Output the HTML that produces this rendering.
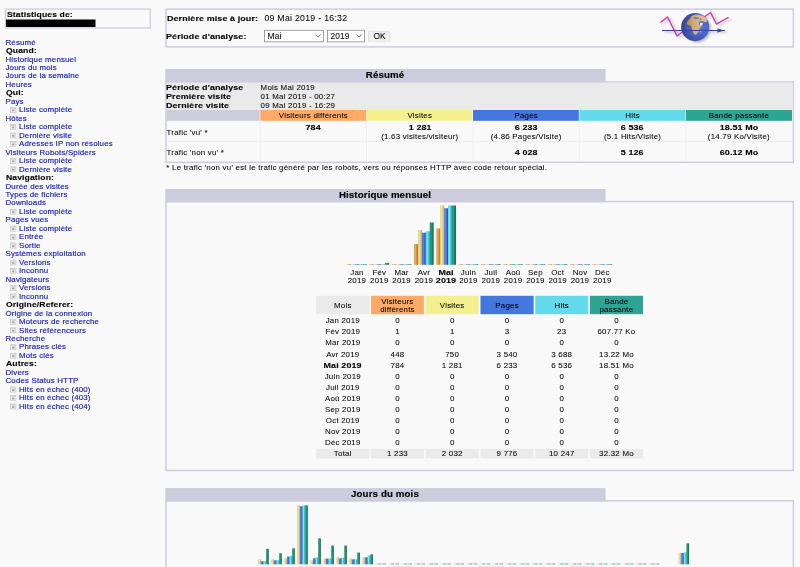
<!DOCTYPE html>
<html><head><meta charset="utf-8"><title>Statistiques</title>
<style>
html,body{margin:0;padding:0;}
body{width:800px;height:567px;overflow:hidden;background:#f9f9f9;font-family:"Liberation Sans",sans-serif;font-size:7.9px;color:#000;position:relative;}
.a{position:absolute;white-space:nowrap;}
.t{position:absolute;white-space:nowrap;line-height:9px;height:9px;font-size:7.9px;letter-spacing:0.17px;-webkit-text-stroke:0.06px currentColor;}
.m{letter-spacing:0.23px;}
.b{-webkit-text-stroke:0.12px currentColor;font-weight:bold;letter-spacing:0.1px;transform:scaleX(1.09);transform-origin:0 50%;}
.mb{-webkit-text-stroke:0.12px currentColor;font-weight:bold;letter-spacing:0.1px;transform:scaleX(1.13);transform-origin:0 50%;}
.ti{-webkit-text-stroke:0.15px currentColor;font-weight:bold;font-size:8.6px;letter-spacing:0.1px;transform:scaleX(1.13);}
.c.mb,.c.ti{transform-origin:50% 50%;}
.lk{color:#1018bb;-webkit-text-stroke:0.15px currentColor;}
.c{text-align:center;}
#sh{position:absolute;left:0;top:0;}
#all{position:absolute;left:0;top:0;width:800px;height:567px;filter:blur(0.3px);}
</style></head><body>
<div id="all"><svg id="sh" width="800" height="567" viewBox="0 0 800 567"><defs><linearGradient id="gU" x1="0" x2="1" y1="0" y2="0"><stop offset="0" stop-color="#d49038"/><stop offset="0.3" stop-color="#ecb060"/><stop offset="1" stop-color="#b07018"/></linearGradient><linearGradient id="gV" x1="0" x2="1" y1="0" y2="0"><stop offset="0" stop-color="#d4c878"/><stop offset="0.3" stop-color="#ece4a0"/><stop offset="1" stop-color="#c0b060"/></linearGradient><linearGradient id="gP" x1="0" x2="1" y1="0" y2="0"><stop offset="0" stop-color="#3a60d0"/><stop offset="0.3" stop-color="#5c88ee"/><stop offset="1" stop-color="#2444aa"/></linearGradient><linearGradient id="gH" x1="0" x2="1" y1="0" y2="0"><stop offset="0" stop-color="#40d0e0"/><stop offset="0.3" stop-color="#78ecf6"/><stop offset="1" stop-color="#20a0b8"/></linearGradient><linearGradient id="gK" x1="0" x2="1" y1="0" y2="0"><stop offset="0" stop-color="#1a8868"/><stop offset="0.3" stop-color="#2a9c7c"/><stop offset="1" stop-color="#0a6c50"/></linearGradient></defs>
<rect x="5.53" y="9.03" width="144.75" height="18.95" fill="none" stroke="#ccccdd" stroke-width="1.25"/>
<rect x="6.00" y="19.50" width="89.50" height="7.50" fill="#000"/>
<rect x="10.45" y="107.56" width="5.5" height="5.0" fill="#ececec" stroke="#c6c6c6" stroke-width="0.7"/>
<rect x="10.80" y="107.91" width="4.8" height="1.1" fill="#d2d2d2"/>
<rect x="12.10" y="109.66" width="2.2" height="1.7" fill="#a0a0a0"/>
<rect x="10.45" y="124.50" width="5.5" height="5.0" fill="#ececec" stroke="#c6c6c6" stroke-width="0.7"/>
<rect x="10.80" y="124.85" width="4.8" height="1.1" fill="#d2d2d2"/>
<rect x="12.10" y="126.60" width="2.2" height="1.7" fill="#a0a0a0"/>
<rect x="10.45" y="132.97" width="5.5" height="5.0" fill="#ececec" stroke="#c6c6c6" stroke-width="0.7"/>
<rect x="10.80" y="133.32" width="4.8" height="1.1" fill="#d2d2d2"/>
<rect x="12.10" y="135.07" width="2.2" height="1.7" fill="#a0a0a0"/>
<rect x="10.45" y="141.44" width="5.5" height="5.0" fill="#ececec" stroke="#c6c6c6" stroke-width="0.7"/>
<rect x="10.80" y="141.79" width="4.8" height="1.1" fill="#d2d2d2"/>
<rect x="12.10" y="143.54" width="2.2" height="1.7" fill="#a0a0a0"/>
<rect x="10.45" y="158.38" width="5.5" height="5.0" fill="#ececec" stroke="#c6c6c6" stroke-width="0.7"/>
<rect x="10.80" y="158.73" width="4.8" height="1.1" fill="#d2d2d2"/>
<rect x="12.10" y="160.48" width="2.2" height="1.7" fill="#a0a0a0"/>
<rect x="10.45" y="166.85" width="5.5" height="5.0" fill="#ececec" stroke="#c6c6c6" stroke-width="0.7"/>
<rect x="10.80" y="167.20" width="4.8" height="1.1" fill="#d2d2d2"/>
<rect x="12.10" y="168.95" width="2.2" height="1.7" fill="#a0a0a0"/>
<rect x="10.45" y="209.20" width="5.5" height="5.0" fill="#ececec" stroke="#c6c6c6" stroke-width="0.7"/>
<rect x="10.80" y="209.55" width="4.8" height="1.1" fill="#d2d2d2"/>
<rect x="12.10" y="211.30" width="2.2" height="1.7" fill="#a0a0a0"/>
<rect x="10.45" y="226.14" width="5.5" height="5.0" fill="#ececec" stroke="#c6c6c6" stroke-width="0.7"/>
<rect x="10.80" y="226.49" width="4.8" height="1.1" fill="#d2d2d2"/>
<rect x="12.10" y="228.24" width="2.2" height="1.7" fill="#a0a0a0"/>
<rect x="10.45" y="234.61" width="5.5" height="5.0" fill="#ececec" stroke="#c6c6c6" stroke-width="0.7"/>
<rect x="10.80" y="234.96" width="4.8" height="1.1" fill="#d2d2d2"/>
<rect x="12.10" y="236.71" width="2.2" height="1.7" fill="#a0a0a0"/>
<rect x="10.45" y="243.08" width="5.5" height="5.0" fill="#ececec" stroke="#c6c6c6" stroke-width="0.7"/>
<rect x="10.80" y="243.43" width="4.8" height="1.1" fill="#d2d2d2"/>
<rect x="12.10" y="245.18" width="2.2" height="1.7" fill="#a0a0a0"/>
<rect x="10.45" y="260.02" width="5.5" height="5.0" fill="#ececec" stroke="#c6c6c6" stroke-width="0.7"/>
<rect x="10.80" y="260.37" width="4.8" height="1.1" fill="#d2d2d2"/>
<rect x="12.10" y="262.12" width="2.2" height="1.7" fill="#a0a0a0"/>
<rect x="10.45" y="268.49" width="5.5" height="5.0" fill="#ececec" stroke="#c6c6c6" stroke-width="0.7"/>
<rect x="10.80" y="268.84" width="4.8" height="1.1" fill="#d2d2d2"/>
<rect x="12.10" y="270.59" width="2.2" height="1.7" fill="#a0a0a0"/>
<rect x="10.45" y="285.43" width="5.5" height="5.0" fill="#ececec" stroke="#c6c6c6" stroke-width="0.7"/>
<rect x="10.80" y="285.78" width="4.8" height="1.1" fill="#d2d2d2"/>
<rect x="12.10" y="287.53" width="2.2" height="1.7" fill="#a0a0a0"/>
<rect x="10.45" y="293.90" width="5.5" height="5.0" fill="#ececec" stroke="#c6c6c6" stroke-width="0.7"/>
<rect x="10.80" y="294.25" width="4.8" height="1.1" fill="#d2d2d2"/>
<rect x="12.10" y="296.00" width="2.2" height="1.7" fill="#a0a0a0"/>
<rect x="10.45" y="319.31" width="5.5" height="5.0" fill="#ececec" stroke="#c6c6c6" stroke-width="0.7"/>
<rect x="10.80" y="319.66" width="4.8" height="1.1" fill="#d2d2d2"/>
<rect x="12.10" y="321.41" width="2.2" height="1.7" fill="#a0a0a0"/>
<rect x="10.45" y="327.78" width="5.5" height="5.0" fill="#ececec" stroke="#c6c6c6" stroke-width="0.7"/>
<rect x="10.80" y="328.13" width="4.8" height="1.1" fill="#d2d2d2"/>
<rect x="12.10" y="329.88" width="2.2" height="1.7" fill="#a0a0a0"/>
<rect x="10.45" y="344.72" width="5.5" height="5.0" fill="#ececec" stroke="#c6c6c6" stroke-width="0.7"/>
<rect x="10.80" y="345.07" width="4.8" height="1.1" fill="#d2d2d2"/>
<rect x="12.10" y="346.82" width="2.2" height="1.7" fill="#a0a0a0"/>
<rect x="10.45" y="353.19" width="5.5" height="5.0" fill="#ececec" stroke="#c6c6c6" stroke-width="0.7"/>
<rect x="10.80" y="353.54" width="4.8" height="1.1" fill="#d2d2d2"/>
<rect x="12.10" y="355.29" width="2.2" height="1.7" fill="#a0a0a0"/>
<rect x="10.45" y="387.07" width="5.5" height="5.0" fill="#ececec" stroke="#c6c6c6" stroke-width="0.7"/>
<rect x="10.80" y="387.42" width="4.8" height="1.1" fill="#d2d2d2"/>
<rect x="12.10" y="389.17" width="2.2" height="1.7" fill="#a0a0a0"/>
<rect x="10.45" y="395.54" width="5.5" height="5.0" fill="#ececec" stroke="#c6c6c6" stroke-width="0.7"/>
<rect x="10.80" y="395.89" width="4.8" height="1.1" fill="#d2d2d2"/>
<rect x="12.10" y="397.64" width="2.2" height="1.7" fill="#a0a0a0"/>
<rect x="10.45" y="404.01" width="5.5" height="5.0" fill="#ececec" stroke="#c6c6c6" stroke-width="0.7"/>
<rect x="10.80" y="404.36" width="4.8" height="1.1" fill="#d2d2d2"/>
<rect x="12.10" y="406.11" width="2.2" height="1.7" fill="#a0a0a0"/>
<rect x="166.00" y="9.15" width="627.40" height="37.70" fill="none" stroke="#ccccdd" stroke-width="1.50"/>
<rect x="264.50" y="30.30" width="58.90" height="11.50" fill="#fff" stroke="#8c8c8c" stroke-width="0.8"/>
<path d="M315.50 34.45 l2.6 2.6 l2.6 -2.6" fill="none" stroke="#555" stroke-width="0.85"/>
<rect x="327.50" y="30.30" width="37.00" height="11.50" fill="#fff" stroke="#8c8c8c" stroke-width="0.8"/>
<path d="M356.60 34.45 l2.6 2.6 l2.6 -2.6" fill="none" stroke="#555" stroke-width="0.85"/>
<rect x="368.55" y="31.75" width="21.5" height="9.5" fill="#f0f0f0" stroke="#dadada" stroke-width="0.7"/>
<rect x="165.25" y="69.00" width="440.30" height="13.70" fill="#ccccdd"/>
<rect x="166.00" y="81.95" width="627.40" height="80.40" fill="none" stroke="#ccccdd" stroke-width="1.50"/>
<rect x="166.75" y="82.70" width="625.90" height="27.30" fill="#eaeaea"/>
<rect x="260.30" y="110.00" width="105.70" height="10.80" fill="#ffaa66"/>
<rect x="366.60" y="110.00" width="105.80" height="10.80" fill="#f4f090"/>
<rect x="473.00" y="110.00" width="105.80" height="10.80" fill="#4477dd"/>
<rect x="579.40" y="110.00" width="105.80" height="10.80" fill="#62daec"/>
<rect x="685.80" y="110.00" width="106.20" height="10.80" fill="#2ea495"/>
<rect x="166.75" y="110.00" width="92.95" height="10.80" fill="#ccccdd"/>
<rect x="166.75" y="141.40" width="625.90" height="0.70" fill="#e6e6e6"/>
<rect x="259.90" y="121.00" width="0.70" height="40.60" fill="#ececec"/>
<rect x="366.20" y="121.00" width="0.70" height="40.60" fill="#ececec"/>
<rect x="472.60" y="121.00" width="0.70" height="40.60" fill="#ececec"/>
<rect x="579.00" y="121.00" width="0.70" height="40.60" fill="#ececec"/>
<rect x="685.40" y="121.00" width="0.70" height="40.60" fill="#ececec"/>
<rect x="165.25" y="189.00" width="440.30" height="13.30" fill="#ccccdd"/>
<rect x="166.00" y="201.55" width="627.40" height="268.90" fill="none" stroke="#ccccdd" stroke-width="1.50"/>
<rect x="347.20" y="264.14" width="3.92" height="0.66" fill="url(#gU)"/>
<rect x="351.12" y="264.14" width="3.92" height="0.66" fill="url(#gV)"/>
<rect x="355.04" y="264.14" width="3.92" height="0.66" fill="url(#gP)"/>
<rect x="358.96" y="264.14" width="3.92" height="0.66" fill="url(#gH)"/>
<rect x="362.88" y="264.14" width="3.92" height="0.66" fill="url(#gK)"/>
<rect x="369.50" y="264.14" width="3.92" height="0.66" fill="url(#gU)"/>
<rect x="373.42" y="264.14" width="3.92" height="0.66" fill="url(#gV)"/>
<rect x="377.34" y="264.14" width="3.92" height="0.66" fill="url(#gP)"/>
<rect x="381.26" y="264.14" width="3.92" height="0.66" fill="url(#gH)"/>
<rect x="385.18" y="262.90" width="3.92" height="1.90" fill="url(#gK)"/>
<rect x="391.80" y="264.14" width="3.92" height="0.66" fill="url(#gU)"/>
<rect x="395.72" y="264.14" width="3.92" height="0.66" fill="url(#gV)"/>
<rect x="399.64" y="264.14" width="3.92" height="0.66" fill="url(#gP)"/>
<rect x="403.56" y="264.14" width="3.92" height="0.66" fill="url(#gH)"/>
<rect x="407.48" y="264.14" width="3.92" height="0.66" fill="url(#gK)"/>
<rect x="414.10" y="244.06" width="3.92" height="20.74" fill="url(#gU)"/>
<rect x="418.02" y="230.08" width="3.92" height="34.72" fill="url(#gV)"/>
<rect x="421.94" y="232.68" width="3.92" height="32.12" fill="url(#gP)"/>
<rect x="425.86" y="231.34" width="3.92" height="33.46" fill="url(#gH)"/>
<rect x="429.78" y="222.45" width="3.92" height="42.35" fill="url(#gK)"/>
<rect x="436.40" y="228.51" width="3.92" height="36.29" fill="url(#gU)"/>
<rect x="440.32" y="205.50" width="3.92" height="59.30" fill="url(#gV)"/>
<rect x="444.24" y="208.25" width="3.92" height="56.55" fill="url(#gP)"/>
<rect x="448.16" y="205.50" width="3.92" height="59.30" fill="url(#gH)"/>
<rect x="452.08" y="205.50" width="3.92" height="59.30" fill="url(#gK)"/>
<rect x="458.70" y="264.14" width="3.92" height="0.66" fill="url(#gU)"/>
<rect x="462.62" y="264.14" width="3.92" height="0.66" fill="url(#gV)"/>
<rect x="466.54" y="264.14" width="3.92" height="0.66" fill="url(#gP)"/>
<rect x="470.46" y="264.14" width="3.92" height="0.66" fill="url(#gH)"/>
<rect x="474.38" y="264.14" width="3.92" height="0.66" fill="url(#gK)"/>
<rect x="481.00" y="264.14" width="3.92" height="0.66" fill="url(#gU)"/>
<rect x="484.92" y="264.14" width="3.92" height="0.66" fill="url(#gV)"/>
<rect x="488.84" y="264.14" width="3.92" height="0.66" fill="url(#gP)"/>
<rect x="492.76" y="264.14" width="3.92" height="0.66" fill="url(#gH)"/>
<rect x="496.68" y="264.14" width="3.92" height="0.66" fill="url(#gK)"/>
<rect x="503.30" y="264.14" width="3.92" height="0.66" fill="url(#gU)"/>
<rect x="507.22" y="264.14" width="3.92" height="0.66" fill="url(#gV)"/>
<rect x="511.14" y="264.14" width="3.92" height="0.66" fill="url(#gP)"/>
<rect x="515.06" y="264.14" width="3.92" height="0.66" fill="url(#gH)"/>
<rect x="518.98" y="264.14" width="3.92" height="0.66" fill="url(#gK)"/>
<rect x="525.60" y="264.14" width="3.92" height="0.66" fill="url(#gU)"/>
<rect x="529.52" y="264.14" width="3.92" height="0.66" fill="url(#gV)"/>
<rect x="533.44" y="264.14" width="3.92" height="0.66" fill="url(#gP)"/>
<rect x="537.36" y="264.14" width="3.92" height="0.66" fill="url(#gH)"/>
<rect x="541.28" y="264.14" width="3.92" height="0.66" fill="url(#gK)"/>
<rect x="547.90" y="264.14" width="3.92" height="0.66" fill="url(#gU)"/>
<rect x="551.82" y="264.14" width="3.92" height="0.66" fill="url(#gV)"/>
<rect x="555.74" y="264.14" width="3.92" height="0.66" fill="url(#gP)"/>
<rect x="559.66" y="264.14" width="3.92" height="0.66" fill="url(#gH)"/>
<rect x="563.58" y="264.14" width="3.92" height="0.66" fill="url(#gK)"/>
<rect x="570.20" y="264.14" width="3.92" height="0.66" fill="url(#gU)"/>
<rect x="574.12" y="264.14" width="3.92" height="0.66" fill="url(#gV)"/>
<rect x="578.04" y="264.14" width="3.92" height="0.66" fill="url(#gP)"/>
<rect x="581.96" y="264.14" width="3.92" height="0.66" fill="url(#gH)"/>
<rect x="585.88" y="264.14" width="3.92" height="0.66" fill="url(#gK)"/>
<rect x="592.50" y="264.14" width="3.92" height="0.66" fill="url(#gU)"/>
<rect x="596.42" y="264.14" width="3.92" height="0.66" fill="url(#gV)"/>
<rect x="600.34" y="264.14" width="3.92" height="0.66" fill="url(#gP)"/>
<rect x="604.26" y="264.14" width="3.92" height="0.66" fill="url(#gH)"/>
<rect x="608.18" y="264.14" width="3.92" height="0.66" fill="url(#gK)"/>
<rect x="316.20" y="295.80" width="53.20" height="18.40" fill="#eaeaea"/>
<rect x="371.00" y="295.80" width="52.90" height="18.40" fill="#ffaa66"/>
<rect x="425.70" y="295.80" width="53.00" height="18.40" fill="#f4f090"/>
<rect x="480.50" y="295.80" width="53.10" height="18.40" fill="#4477dd"/>
<rect x="535.30" y="295.80" width="52.90" height="18.40" fill="#62daec"/>
<rect x="589.90" y="295.80" width="53.10" height="18.40" fill="#2ea495"/>
<rect x="316.20" y="448.90" width="53.20" height="9.40" fill="#eaeaea"/>
<rect x="371.00" y="448.90" width="52.90" height="9.40" fill="#eaeaea"/>
<rect x="425.70" y="448.90" width="53.00" height="9.40" fill="#eaeaea"/>
<rect x="480.50" y="448.90" width="53.10" height="9.40" fill="#eaeaea"/>
<rect x="535.30" y="448.90" width="52.90" height="9.40" fill="#eaeaea"/>
<rect x="589.90" y="448.90" width="53.10" height="9.40" fill="#eaeaea"/>
<rect x="165.25" y="488.10" width="440.30" height="13.40" fill="#ccccdd"/>
<rect x="166.00" y="500.75" width="627.40" height="98.50" fill="none" stroke="#ccccdd" stroke-width="1.50"/>
<rect x="258.30" y="559.30" width="2.62" height="5.00" fill="url(#gV)"/>
<rect x="260.92" y="561.30" width="2.62" height="3.00" fill="url(#gP)"/>
<rect x="263.54" y="561.30" width="2.62" height="3.00" fill="url(#gH)"/>
<rect x="266.16" y="548.80" width="2.62" height="15.50" fill="url(#gK)"/>
<rect x="271.32" y="559.30" width="2.62" height="5.00" fill="url(#gV)"/>
<rect x="273.94" y="560.30" width="2.62" height="4.00" fill="url(#gP)"/>
<rect x="276.56" y="560.30" width="2.62" height="4.00" fill="url(#gH)"/>
<rect x="279.18" y="553.30" width="2.62" height="11.00" fill="url(#gK)"/>
<rect x="284.34" y="558.55" width="2.62" height="5.75" fill="url(#gV)"/>
<rect x="286.96" y="556.55" width="2.62" height="7.75" fill="url(#gP)"/>
<rect x="289.58" y="555.80" width="2.62" height="8.50" fill="url(#gH)"/>
<rect x="292.20" y="548.30" width="2.62" height="16.00" fill="url(#gK)"/>
<rect x="297.36" y="505.30" width="2.62" height="59.00" fill="url(#gV)"/>
<rect x="299.98" y="506.30" width="2.62" height="58.00" fill="url(#gP)"/>
<rect x="302.60" y="505.30" width="2.62" height="59.00" fill="url(#gH)"/>
<rect x="305.22" y="505.30" width="2.62" height="59.00" fill="url(#gK)"/>
<rect x="310.38" y="560.30" width="2.62" height="4.00" fill="url(#gV)"/>
<rect x="313.00" y="558.30" width="2.62" height="6.00" fill="url(#gP)"/>
<rect x="315.62" y="557.30" width="2.62" height="7.00" fill="url(#gH)"/>
<rect x="318.24" y="538.30" width="2.62" height="26.00" fill="url(#gK)"/>
<rect x="323.40" y="558.55" width="2.62" height="5.75" fill="url(#gV)"/>
<rect x="326.02" y="558.55" width="2.62" height="5.75" fill="url(#gP)"/>
<rect x="328.64" y="558.55" width="2.62" height="5.75" fill="url(#gH)"/>
<rect x="331.26" y="545.55" width="2.62" height="18.75" fill="url(#gK)"/>
<rect x="336.42" y="557.30" width="2.62" height="7.00" fill="url(#gV)"/>
<rect x="339.04" y="558.30" width="2.62" height="6.00" fill="url(#gP)"/>
<rect x="341.66" y="557.80" width="2.62" height="6.50" fill="url(#gH)"/>
<rect x="344.28" y="545.55" width="2.62" height="18.75" fill="url(#gK)"/>
<rect x="349.44" y="558.55" width="2.62" height="5.75" fill="url(#gV)"/>
<rect x="352.06" y="559.30" width="2.62" height="5.00" fill="url(#gP)"/>
<rect x="354.68" y="559.30" width="2.62" height="5.00" fill="url(#gH)"/>
<rect x="357.30" y="552.55" width="2.62" height="11.75" fill="url(#gK)"/>
<rect x="362.46" y="557.30" width="2.62" height="7.00" fill="url(#gV)"/>
<rect x="365.08" y="557.30" width="2.62" height="7.00" fill="url(#gP)"/>
<rect x="367.70" y="555.30" width="2.62" height="9.00" fill="url(#gH)"/>
<rect x="370.32" y="554.30" width="2.62" height="10.00" fill="url(#gK)"/>
<rect x="375.48" y="563.64" width="2.62" height="0.66" fill="url(#gV)"/>
<rect x="378.10" y="563.64" width="2.62" height="0.66" fill="url(#gP)"/>
<rect x="380.72" y="563.64" width="2.62" height="0.66" fill="url(#gH)"/>
<rect x="383.34" y="563.64" width="2.62" height="0.66" fill="url(#gK)"/>
<rect x="388.50" y="563.64" width="2.62" height="0.66" fill="url(#gV)"/>
<rect x="391.12" y="563.64" width="2.62" height="0.66" fill="url(#gP)"/>
<rect x="393.74" y="563.64" width="2.62" height="0.66" fill="url(#gH)"/>
<rect x="396.36" y="563.64" width="2.62" height="0.66" fill="url(#gK)"/>
<rect x="401.52" y="563.64" width="2.62" height="0.66" fill="url(#gV)"/>
<rect x="404.14" y="563.64" width="2.62" height="0.66" fill="url(#gP)"/>
<rect x="406.76" y="563.64" width="2.62" height="0.66" fill="url(#gH)"/>
<rect x="409.38" y="563.64" width="2.62" height="0.66" fill="url(#gK)"/>
<rect x="414.54" y="563.64" width="2.62" height="0.66" fill="url(#gV)"/>
<rect x="417.16" y="563.64" width="2.62" height="0.66" fill="url(#gP)"/>
<rect x="419.78" y="563.64" width="2.62" height="0.66" fill="url(#gH)"/>
<rect x="422.40" y="563.64" width="2.62" height="0.66" fill="url(#gK)"/>
<rect x="427.56" y="563.64" width="2.62" height="0.66" fill="url(#gV)"/>
<rect x="430.18" y="563.64" width="2.62" height="0.66" fill="url(#gP)"/>
<rect x="432.80" y="563.64" width="2.62" height="0.66" fill="url(#gH)"/>
<rect x="435.42" y="563.64" width="2.62" height="0.66" fill="url(#gK)"/>
<rect x="440.58" y="563.64" width="2.62" height="0.66" fill="url(#gV)"/>
<rect x="443.20" y="563.64" width="2.62" height="0.66" fill="url(#gP)"/>
<rect x="445.82" y="563.64" width="2.62" height="0.66" fill="url(#gH)"/>
<rect x="448.44" y="563.64" width="2.62" height="0.66" fill="url(#gK)"/>
<rect x="453.60" y="563.64" width="2.62" height="0.66" fill="url(#gV)"/>
<rect x="456.22" y="563.64" width="2.62" height="0.66" fill="url(#gP)"/>
<rect x="458.84" y="563.64" width="2.62" height="0.66" fill="url(#gH)"/>
<rect x="461.46" y="563.64" width="2.62" height="0.66" fill="url(#gK)"/>
<rect x="466.62" y="563.64" width="2.62" height="0.66" fill="url(#gV)"/>
<rect x="469.24" y="563.64" width="2.62" height="0.66" fill="url(#gP)"/>
<rect x="471.86" y="563.64" width="2.62" height="0.66" fill="url(#gH)"/>
<rect x="474.48" y="563.64" width="2.62" height="0.66" fill="url(#gK)"/>
<rect x="479.64" y="563.64" width="2.62" height="0.66" fill="url(#gV)"/>
<rect x="482.26" y="563.64" width="2.62" height="0.66" fill="url(#gP)"/>
<rect x="484.88" y="563.64" width="2.62" height="0.66" fill="url(#gH)"/>
<rect x="487.50" y="563.64" width="2.62" height="0.66" fill="url(#gK)"/>
<rect x="492.66" y="563.64" width="2.62" height="0.66" fill="url(#gV)"/>
<rect x="495.28" y="563.64" width="2.62" height="0.66" fill="url(#gP)"/>
<rect x="497.90" y="563.64" width="2.62" height="0.66" fill="url(#gH)"/>
<rect x="500.52" y="563.64" width="2.62" height="0.66" fill="url(#gK)"/>
<rect x="505.68" y="563.64" width="2.62" height="0.66" fill="url(#gV)"/>
<rect x="508.30" y="563.64" width="2.62" height="0.66" fill="url(#gP)"/>
<rect x="510.92" y="563.64" width="2.62" height="0.66" fill="url(#gH)"/>
<rect x="513.54" y="563.64" width="2.62" height="0.66" fill="url(#gK)"/>
<rect x="518.70" y="563.64" width="2.62" height="0.66" fill="url(#gV)"/>
<rect x="521.32" y="563.64" width="2.62" height="0.66" fill="url(#gP)"/>
<rect x="523.94" y="563.64" width="2.62" height="0.66" fill="url(#gH)"/>
<rect x="526.56" y="563.64" width="2.62" height="0.66" fill="url(#gK)"/>
<rect x="531.72" y="563.64" width="2.62" height="0.66" fill="url(#gV)"/>
<rect x="534.34" y="563.64" width="2.62" height="0.66" fill="url(#gP)"/>
<rect x="536.96" y="563.64" width="2.62" height="0.66" fill="url(#gH)"/>
<rect x="539.58" y="563.64" width="2.62" height="0.66" fill="url(#gK)"/>
<rect x="544.74" y="563.64" width="2.62" height="0.66" fill="url(#gV)"/>
<rect x="547.36" y="563.64" width="2.62" height="0.66" fill="url(#gP)"/>
<rect x="549.98" y="563.64" width="2.62" height="0.66" fill="url(#gH)"/>
<rect x="552.60" y="563.64" width="2.62" height="0.66" fill="url(#gK)"/>
<rect x="557.76" y="563.64" width="2.62" height="0.66" fill="url(#gV)"/>
<rect x="560.38" y="563.64" width="2.62" height="0.66" fill="url(#gP)"/>
<rect x="563.00" y="563.64" width="2.62" height="0.66" fill="url(#gH)"/>
<rect x="565.62" y="563.64" width="2.62" height="0.66" fill="url(#gK)"/>
<rect x="570.78" y="563.64" width="2.62" height="0.66" fill="url(#gV)"/>
<rect x="573.40" y="563.64" width="2.62" height="0.66" fill="url(#gP)"/>
<rect x="576.02" y="563.64" width="2.62" height="0.66" fill="url(#gH)"/>
<rect x="578.64" y="563.64" width="2.62" height="0.66" fill="url(#gK)"/>
<rect x="583.80" y="563.64" width="2.62" height="0.66" fill="url(#gV)"/>
<rect x="586.42" y="563.64" width="2.62" height="0.66" fill="url(#gP)"/>
<rect x="589.04" y="563.64" width="2.62" height="0.66" fill="url(#gH)"/>
<rect x="591.66" y="563.64" width="2.62" height="0.66" fill="url(#gK)"/>
<rect x="596.82" y="563.64" width="2.62" height="0.66" fill="url(#gV)"/>
<rect x="599.44" y="563.64" width="2.62" height="0.66" fill="url(#gP)"/>
<rect x="602.06" y="563.64" width="2.62" height="0.66" fill="url(#gH)"/>
<rect x="604.68" y="563.64" width="2.62" height="0.66" fill="url(#gK)"/>
<rect x="609.84" y="563.64" width="2.62" height="0.66" fill="url(#gV)"/>
<rect x="612.46" y="563.64" width="2.62" height="0.66" fill="url(#gP)"/>
<rect x="615.08" y="563.64" width="2.62" height="0.66" fill="url(#gH)"/>
<rect x="617.70" y="563.64" width="2.62" height="0.66" fill="url(#gK)"/>
<rect x="622.86" y="563.64" width="2.62" height="0.66" fill="url(#gV)"/>
<rect x="625.48" y="563.64" width="2.62" height="0.66" fill="url(#gP)"/>
<rect x="628.10" y="563.64" width="2.62" height="0.66" fill="url(#gH)"/>
<rect x="630.72" y="563.64" width="2.62" height="0.66" fill="url(#gK)"/>
<rect x="635.88" y="563.64" width="2.62" height="0.66" fill="url(#gV)"/>
<rect x="638.50" y="563.64" width="2.62" height="0.66" fill="url(#gP)"/>
<rect x="641.12" y="563.64" width="2.62" height="0.66" fill="url(#gH)"/>
<rect x="643.74" y="563.64" width="2.62" height="0.66" fill="url(#gK)"/>
<rect x="648.90" y="563.64" width="2.62" height="0.66" fill="url(#gV)"/>
<rect x="651.52" y="563.64" width="2.62" height="0.66" fill="url(#gP)"/>
<rect x="654.14" y="563.64" width="2.62" height="0.66" fill="url(#gH)"/>
<rect x="656.76" y="563.64" width="2.62" height="0.66" fill="url(#gK)"/>
<rect x="678.60" y="553.10" width="2.62" height="11.20" fill="url(#gV)"/>
<rect x="681.22" y="553.10" width="2.62" height="11.20" fill="url(#gP)"/>
<rect x="683.84" y="552.30" width="2.62" height="12.00" fill="url(#gH)"/>
<rect x="686.46" y="543.30" width="2.62" height="21.00" fill="url(#gK)"/>
<rect x="296.36" y="565.90" width="12.42" height="1.20" fill="#e8e8e8"/>
<rect x="309.38" y="565.90" width="12.42" height="1.20" fill="#e8e8e8"/>
<rect x="387.50" y="565.90" width="12.42" height="1.20" fill="#e8e8e8"/>
<rect x="400.52" y="565.90" width="12.42" height="1.20" fill="#e8e8e8"/>
<rect x="478.64" y="565.90" width="12.42" height="1.20" fill="#e8e8e8"/>
<rect x="491.66" y="565.90" width="12.42" height="1.20" fill="#e8e8e8"/>
<rect x="569.78" y="565.90" width="12.42" height="1.20" fill="#e8e8e8"/>
<rect x="582.80" y="565.90" width="12.42" height="1.20" fill="#e8e8e8"/>
</svg>
<div class="t b" style="left:6.5px;top:10px;">Statistiques de:</div>
<div class="t lk" style="left:5.5px;top:37.56px;">Résumé</div>
<div class="t b" style="left:5.5px;top:46.03px;">Quand:</div>
<div class="t lk" style="left:5.5px;top:54.50px;">Historique mensuel</div>
<div class="t lk" style="left:5.5px;top:62.97px;">Jours du mois</div>
<div class="t lk" style="left:5.5px;top:71.44px;">Jours de la semaine</div>
<div class="t lk" style="left:5.5px;top:79.91px;">Heures</div>
<div class="t b" style="left:5.5px;top:88.38px;">Qui:</div>
<div class="t lk" style="left:5.5px;top:96.85px;">Pays</div>
<div class="t lk" style="left:19px;top:105.32px;">Liste complète</div>
<div class="t lk" style="left:5.5px;top:113.79px;">Hôtes</div>
<div class="t lk" style="left:19px;top:122.26px;">Liste complète</div>
<div class="t lk" style="left:19px;top:130.73px;">Dernière visite</div>
<div class="t lk" style="left:19px;top:139.20px;">Adresses IP non résolues</div>
<div class="t lk" style="left:5.5px;top:147.67px;">Visiteurs Robots/Spiders</div>
<div class="t lk" style="left:19px;top:156.14px;">Liste complète</div>
<div class="t lk" style="left:19px;top:164.61px;">Dernière visite</div>
<div class="t b" style="left:5.5px;top:173.08px;">Navigation:</div>
<div class="t lk" style="left:5.5px;top:181.55px;">Durée des visites</div>
<div class="t lk" style="left:5.5px;top:190.02px;">Types de fichiers</div>
<div class="t lk" style="left:5.5px;top:198.49px;">Downloads</div>
<div class="t lk" style="left:19px;top:206.96px;">Liste complète</div>
<div class="t lk" style="left:5.5px;top:215.43px;">Pages vues</div>
<div class="t lk" style="left:19px;top:223.90px;">Liste complète</div>
<div class="t lk" style="left:19px;top:232.37px;">Entrée</div>
<div class="t lk" style="left:19px;top:240.84px;">Sortie</div>
<div class="t lk" style="left:5.5px;top:249.31px;">Systèmes exploitation</div>
<div class="t lk" style="left:19px;top:257.78px;">Versions</div>
<div class="t lk" style="left:19px;top:266.25px;">Inconnu</div>
<div class="t lk" style="left:5.5px;top:274.72px;">Navigateurs</div>
<div class="t lk" style="left:19px;top:283.19px;">Versions</div>
<div class="t lk" style="left:19px;top:291.66px;">Inconnu</div>
<div class="t b" style="left:5.5px;top:300.13px;">Origine/Referer:</div>
<div class="t lk" style="left:5.5px;top:308.60px;">Origine de la connexion</div>
<div class="t lk" style="left:19px;top:317.07px;">Moteurs de recherche</div>
<div class="t lk" style="left:19px;top:325.54px;">Sites référenceurs</div>
<div class="t lk" style="left:5.5px;top:334.01px;">Recherche</div>
<div class="t lk" style="left:19px;top:342.48px;">Phrases clés</div>
<div class="t lk" style="left:19px;top:350.95px;">Mots clés</div>
<div class="t b" style="left:5.5px;top:359.42px;">Autres:</div>
<div class="t lk" style="left:5.5px;top:367.89px;">Divers</div>
<div class="t lk" style="left:5.5px;top:376.36px;">Codes Status HTTP</div>
<div class="t lk" style="left:19px;top:384.83px;">Hits en échec (400)</div>
<div class="t lk" style="left:19px;top:393.30px;">Hits en échec (403)</div>
<div class="t lk" style="left:19px;top:401.77px;">Hits en échec (404)</div>
<div class="t mb" style="left:166.5px;top:14px;">Dernière mise à jour:</div>
<div class="t m" style="left:264.4px;top:13.8px;font-size:8.7px;letter-spacing:0.3px;">09 Mai 2019 - 16:32</div>
<div class="t mb" style="left:166.2px;top:31.9px;">Période d'analyse:</div>
<div class="t" style="left:267.6px;top:31.5px;font-size:8.4px;letter-spacing:0.1px;">Mai</div>
<div class="t" style="left:330.6px;top:31.5px;font-size:8.4px;letter-spacing:0.1px;">2019</div>
<div class="t" style="left:373.4px;top:32.2px;font-size:8.4px;letter-spacing:0.1px;">OK</div>
<svg class="a" style="left:658px;top:9px;" width="80" height="36" viewBox="0 0 80 36">
<defs><radialGradient id="g" cx="68%" cy="48%" r="75%"><stop offset="0" stop-color="#5876e2"/><stop offset="0.45" stop-color="#4862c6"/><stop offset="0.8" stop-color="#3c4c9a"/><stop offset="1" stop-color="#2e3a80"/></radialGradient>
<linearGradient id="la" x1="0" x2="1"><stop offset="0" stop-color="#b48a54"/><stop offset="0.35" stop-color="#d2aa76"/><stop offset="1" stop-color="#e4c08c"/></linearGradient>
<filter id="bl" x="-20%" y="-20%" width="140%" height="140%"><feGaussianBlur stdDeviation="0.9"/></filter>
<clipPath id="cg"><circle cx="37.2" cy="18.1" r="14.1"/></clipPath></defs>
<g filter="url(#bl)" opacity="0.45"><circle cx="39.6" cy="19.8" r="13.6" fill="#777"/>
<path d="M5 15 L12 9.5 L21.5 28.5 L27 24.5 M47.5 10.5 L55 5 L61 16.5 L73 10 M6.5 23 L69 23" fill="none" stroke="#777" stroke-width="1.3"/></g>
<path d="M2.5 13.5 L9.5 8 L19 27 L25 22.5" fill="none" stroke="#c63cba" stroke-width="1.4"/>
<path d="M45 9 L52.5 3.5 L58.5 15 L70.5 8.3" fill="none" stroke="#c63cba" stroke-width="1.4"/>
<circle cx="37.2" cy="18.1" r="14.1" fill="url(#g)"/>
<g clip-path="url(#cg)">
<path d="M32.1 10 C30 11.5 28.6 12.8 28.8 14.2 C28.8 15.6 29.6 16.3 31 16.3 C32.2 16.3 33 16.5 33.2 17.6 C33.8 19.5 34.3 21 34.8 22.6 C35.3 24.2 35.8 25.4 36.8 25.8 C38 26.1 39.4 24.6 40.4 23 C41.2 21.6 41.4 20 41.9 18.9 C42.6 18 43.6 17.5 43.8 17 C43 16.6 41.6 16.4 41.3 15.6 C40.9 14.6 40.8 13.4 41.4 12.8 C42.4 12 43.6 11.8 44.6 12 C45.8 12.6 47 13.4 48.6 13 C49.4 11.6 48.8 10.2 48 9.2 C46.6 7.4 45 6.6 43.4 6.2 C41.6 5.6 39.6 5.4 37.8 5.5 C36 5.8 34.6 6.4 33.4 7.2 C32.6 8 32 9 32.1 10 Z" fill="url(#la)"/>
<ellipse cx="38.2" cy="9.1" rx="2.6" ry="0.9" fill="#5a74d8" transform="rotate(8 38.2 9.1)"/>
<ellipse cx="42.6" cy="10.2" rx="1" ry="0.6" fill="#5a74d8"/>
<ellipse cx="42.7" cy="22.6" rx="0.6" ry="1.1" fill="#d8ae78"/>
<ellipse cx="28.8" cy="19.3" rx="1.2" ry="1" fill="#5a6aae" opacity="0.8"/>
<ellipse cx="43.6" cy="15" rx="1.7" ry="1.5" fill="#f4f2e6" opacity="0.95"/>
<ellipse cx="45.4" cy="15.6" rx="0.9" ry="1" fill="#3a4488" opacity="0.8"/>
</g>
<path d="M4 21.5 L67 21.5" stroke="#3a409c" stroke-width="1.2"/>
<path d="M59.5 19.6 L66.5 21.5 L59.5 23.4 Z" fill="#3a409c"/>
</svg>
<div class="t ti c" style="left:165.25px;top:71.1px;width:440px;">Résumé</div>
<div class="t mb" style="left:166.2px;top:83.2px;">Période d'analyse</div>
<div class="t m" style="left:260.6px;top:83.2px;">Mois Mai 2019</div>
<div class="t mb" style="left:166.2px;top:92.2px;">Première visite</div>
<div class="t m" style="left:260.6px;top:92.2px;">01 Mai 2019 - 00:27</div>
<div class="t mb" style="left:166.2px;top:101.2px;">Dernière visite</div>
<div class="t m" style="left:260.6px;top:101.2px;">09 Mai 2019 - 16:29</div>
<div class="t m c" style="left:260.3px;top:111px;width:106.3px;">Visiteurs différents</div>
<div class="t m c" style="left:366.6px;top:111px;width:106.4px;">Visites</div>
<div class="t m c" style="left:473px;top:111px;width:106.4px;">Pages</div>
<div class="t m c" style="left:579.4px;top:111px;width:106.4px;">Hits</div>
<div class="t m c" style="left:685.8px;top:111px;width:106.2px;">Bande passante</div>
<div class="t m" style="left:166.6px;top:127.9px;">Trafic 'vu' *</div>
<div class="t m" style="left:166.6px;top:147.7px;">Trafic 'non vu' *</div>
<div class="t mb c" style="left:260.3px;top:123px;width:106.3px;">784</div>
<div class="t mb c" style="left:366.6px;top:123px;width:106.4px;">1 281</div>
<div class="t m c" style="left:366.6px;top:131.6px;width:106.4px;">(1.63 visites/visiteur)</div>
<div class="t mb c" style="left:473px;top:123px;width:106.4px;">6 233</div>
<div class="t m c" style="left:473px;top:131.6px;width:106.4px;">(4.86 Pages/Visite)</div>
<div class="t mb c" style="left:579.4px;top:123px;width:106.4px;">6 536</div>
<div class="t m c" style="left:579.4px;top:131.6px;width:106.4px;">(5.1 Hits/Visite)</div>
<div class="t mb c" style="left:685.8px;top:123px;width:106.2px;">18.51 Mo</div>
<div class="t m c" style="left:685.8px;top:131.6px;width:106.2px;">(14.79 Ko/Visite)</div>
<div class="t mb c" style="left:473px;top:147.7px;width:106.4px;">4 028</div>
<div class="t mb c" style="left:579.4px;top:147.7px;width:106.4px;">5 126</div>
<div class="t mb c" style="left:685.8px;top:147.7px;width:106.2px;">60.12 Mo</div>
<div class="t m" style="left:166.3px;top:163.0px;">* Le trafic 'non vu' est le trafic généré par les robots, vers ou réponses HTTP avec code retour spécial.</div>
<div class="t ti c" style="left:165.25px;top:191.1px;width:440px;">Historique mensuel</div>
<div class="t m c" style="left:337.00px;top:268.2px;width:40px;">Jan</div>
<div class="t m c" style="left:337.00px;top:276.2px;width:40px;">2019</div>
<div class="t m c" style="left:359.30px;top:268.2px;width:40px;">Fév</div>
<div class="t m c" style="left:359.30px;top:276.2px;width:40px;">2019</div>
<div class="t m c" style="left:381.60px;top:268.2px;width:40px;">Mar</div>
<div class="t m c" style="left:381.60px;top:276.2px;width:40px;">2019</div>
<div class="t m c" style="left:403.90px;top:268.2px;width:40px;">Avr</div>
<div class="t m c" style="left:403.90px;top:276.2px;width:40px;">2019</div>
<div class="t mb c" style="left:426.20px;top:268.2px;width:40px;">Mai</div>
<div class="t mb c" style="left:426.20px;top:276.2px;width:40px;">2019</div>
<div class="t m c" style="left:448.50px;top:268.2px;width:40px;">Juin</div>
<div class="t m c" style="left:448.50px;top:276.2px;width:40px;">2019</div>
<div class="t m c" style="left:470.80px;top:268.2px;width:40px;">Juil</div>
<div class="t m c" style="left:470.80px;top:276.2px;width:40px;">2019</div>
<div class="t m c" style="left:493.10px;top:268.2px;width:40px;">Aoû</div>
<div class="t m c" style="left:493.10px;top:276.2px;width:40px;">2019</div>
<div class="t m c" style="left:515.40px;top:268.2px;width:40px;">Sep</div>
<div class="t m c" style="left:515.40px;top:276.2px;width:40px;">2019</div>
<div class="t m c" style="left:537.70px;top:268.2px;width:40px;">Oct</div>
<div class="t m c" style="left:537.70px;top:276.2px;width:40px;">2019</div>
<div class="t m c" style="left:560.00px;top:268.2px;width:40px;">Nov</div>
<div class="t m c" style="left:560.00px;top:276.2px;width:40px;">2019</div>
<div class="t m c" style="left:582.30px;top:268.2px;width:40px;">Déc</div>
<div class="t m c" style="left:582.30px;top:276.2px;width:40px;">2019</div>
<div class="t m c" style="left:316.2px;top:300.9px;width:53.2px;">Mois</div>
<div class="t m c" style="left:371px;top:296.8px;width:52.9px;">Visiteurs</div>
<div class="t m c" style="left:371px;top:305.4px;width:52.9px;">différents</div>
<div class="t m c" style="left:425.7px;top:300.9px;width:53px;">Visites</div>
<div class="t m c" style="left:480.5px;top:300.9px;width:53.1px;">Pages</div>
<div class="t m c" style="left:535.3px;top:300.9px;width:52.9px;">Hits</div>
<div class="t m c" style="left:589.9px;top:296.8px;width:53.1px;">Bande</div>
<div class="t m c" style="left:589.9px;top:305.4px;width:53.1px;">passante</div>
<div class="t m c" style="left:316.2px;top:316.40px;width:53.2px;">Jan 2019</div>
<div class="t m c" style="left:371px;top:316.40px;width:52.9px;">0</div>
<div class="t m c" style="left:425.7px;top:316.40px;width:53px;">0</div>
<div class="t m c" style="left:480.5px;top:316.40px;width:53.1px;">0</div>
<div class="t m c" style="left:535.3px;top:316.40px;width:52.9px;">0</div>
<div class="t m c" style="left:589.9px;top:316.40px;width:53.1px;">0</div>
<div class="t m c" style="left:316.2px;top:327.44px;width:53.2px;">Fév 2019</div>
<div class="t m c" style="left:371px;top:327.44px;width:52.9px;">1</div>
<div class="t m c" style="left:425.7px;top:327.44px;width:53px;">1</div>
<div class="t m c" style="left:480.5px;top:327.44px;width:53.1px;">3</div>
<div class="t m c" style="left:535.3px;top:327.44px;width:52.9px;">23</div>
<div class="t m c" style="left:589.9px;top:327.44px;width:53.1px;">607.77 Ko</div>
<div class="t m c" style="left:316.2px;top:338.48px;width:53.2px;">Mar 2019</div>
<div class="t m c" style="left:371px;top:338.48px;width:52.9px;">0</div>
<div class="t m c" style="left:425.7px;top:338.48px;width:53px;">0</div>
<div class="t m c" style="left:480.5px;top:338.48px;width:53.1px;">0</div>
<div class="t m c" style="left:535.3px;top:338.48px;width:52.9px;">0</div>
<div class="t m c" style="left:589.9px;top:338.48px;width:53.1px;">0</div>
<div class="t m c" style="left:316.2px;top:349.52px;width:53.2px;">Avr 2019</div>
<div class="t m c" style="left:371px;top:349.52px;width:52.9px;">448</div>
<div class="t m c" style="left:425.7px;top:349.52px;width:53px;">750</div>
<div class="t m c" style="left:480.5px;top:349.52px;width:53.1px;">3 540</div>
<div class="t m c" style="left:535.3px;top:349.52px;width:52.9px;">3 688</div>
<div class="t m c" style="left:589.9px;top:349.52px;width:53.1px;">13.22 Mo</div>
<div class="t mb c" style="left:316.2px;top:360.56px;width:53.2px;">Mai 2019</div>
<div class="t m c" style="left:371px;top:360.56px;width:52.9px;">784</div>
<div class="t m c" style="left:425.7px;top:360.56px;width:53px;">1 281</div>
<div class="t m c" style="left:480.5px;top:360.56px;width:53.1px;">6 233</div>
<div class="t m c" style="left:535.3px;top:360.56px;width:52.9px;">6 536</div>
<div class="t m c" style="left:589.9px;top:360.56px;width:53.1px;">18.51 Mo</div>
<div class="t m c" style="left:316.2px;top:371.60px;width:53.2px;">Juin 2019</div>
<div class="t m c" style="left:371px;top:371.60px;width:52.9px;">0</div>
<div class="t m c" style="left:425.7px;top:371.60px;width:53px;">0</div>
<div class="t m c" style="left:480.5px;top:371.60px;width:53.1px;">0</div>
<div class="t m c" style="left:535.3px;top:371.60px;width:52.9px;">0</div>
<div class="t m c" style="left:589.9px;top:371.60px;width:53.1px;">0</div>
<div class="t m c" style="left:316.2px;top:382.64px;width:53.2px;">Juil 2019</div>
<div class="t m c" style="left:371px;top:382.64px;width:52.9px;">0</div>
<div class="t m c" style="left:425.7px;top:382.64px;width:53px;">0</div>
<div class="t m c" style="left:480.5px;top:382.64px;width:53.1px;">0</div>
<div class="t m c" style="left:535.3px;top:382.64px;width:52.9px;">0</div>
<div class="t m c" style="left:589.9px;top:382.64px;width:53.1px;">0</div>
<div class="t m c" style="left:316.2px;top:393.68px;width:53.2px;">Aoû 2019</div>
<div class="t m c" style="left:371px;top:393.68px;width:52.9px;">0</div>
<div class="t m c" style="left:425.7px;top:393.68px;width:53px;">0</div>
<div class="t m c" style="left:480.5px;top:393.68px;width:53.1px;">0</div>
<div class="t m c" style="left:535.3px;top:393.68px;width:52.9px;">0</div>
<div class="t m c" style="left:589.9px;top:393.68px;width:53.1px;">0</div>
<div class="t m c" style="left:316.2px;top:404.72px;width:53.2px;">Sep 2019</div>
<div class="t m c" style="left:371px;top:404.72px;width:52.9px;">0</div>
<div class="t m c" style="left:425.7px;top:404.72px;width:53px;">0</div>
<div class="t m c" style="left:480.5px;top:404.72px;width:53.1px;">0</div>
<div class="t m c" style="left:535.3px;top:404.72px;width:52.9px;">0</div>
<div class="t m c" style="left:589.9px;top:404.72px;width:53.1px;">0</div>
<div class="t m c" style="left:316.2px;top:415.76px;width:53.2px;">Oct 2019</div>
<div class="t m c" style="left:371px;top:415.76px;width:52.9px;">0</div>
<div class="t m c" style="left:425.7px;top:415.76px;width:53px;">0</div>
<div class="t m c" style="left:480.5px;top:415.76px;width:53.1px;">0</div>
<div class="t m c" style="left:535.3px;top:415.76px;width:52.9px;">0</div>
<div class="t m c" style="left:589.9px;top:415.76px;width:53.1px;">0</div>
<div class="t m c" style="left:316.2px;top:426.80px;width:53.2px;">Nov 2019</div>
<div class="t m c" style="left:371px;top:426.80px;width:52.9px;">0</div>
<div class="t m c" style="left:425.7px;top:426.80px;width:53px;">0</div>
<div class="t m c" style="left:480.5px;top:426.80px;width:53.1px;">0</div>
<div class="t m c" style="left:535.3px;top:426.80px;width:52.9px;">0</div>
<div class="t m c" style="left:589.9px;top:426.80px;width:53.1px;">0</div>
<div class="t m c" style="left:316.2px;top:437.84px;width:53.2px;">Déc 2019</div>
<div class="t m c" style="left:371px;top:437.84px;width:52.9px;">0</div>
<div class="t m c" style="left:425.7px;top:437.84px;width:53px;">0</div>
<div class="t m c" style="left:480.5px;top:437.84px;width:53.1px;">0</div>
<div class="t m c" style="left:535.3px;top:437.84px;width:52.9px;">0</div>
<div class="t m c" style="left:589.9px;top:437.84px;width:53.1px;">0</div>
<div class="t m c" style="left:316.2px;top:448.80px;width:53.2px;">Total</div>
<div class="t m c" style="left:371px;top:448.80px;width:52.9px;">1 233</div>
<div class="t m c" style="left:425.7px;top:448.80px;width:53px;">2 032</div>
<div class="t m c" style="left:480.5px;top:448.80px;width:53.1px;">9 776</div>
<div class="t m c" style="left:535.3px;top:448.80px;width:52.9px;">10 247</div>
<div class="t m c" style="left:589.9px;top:448.80px;width:53.1px;">32.32 Mo</div>
<div class="t ti c" style="left:165.25px;top:490.2px;width:440px;">Jours du mois</div>
</div></body></html>
